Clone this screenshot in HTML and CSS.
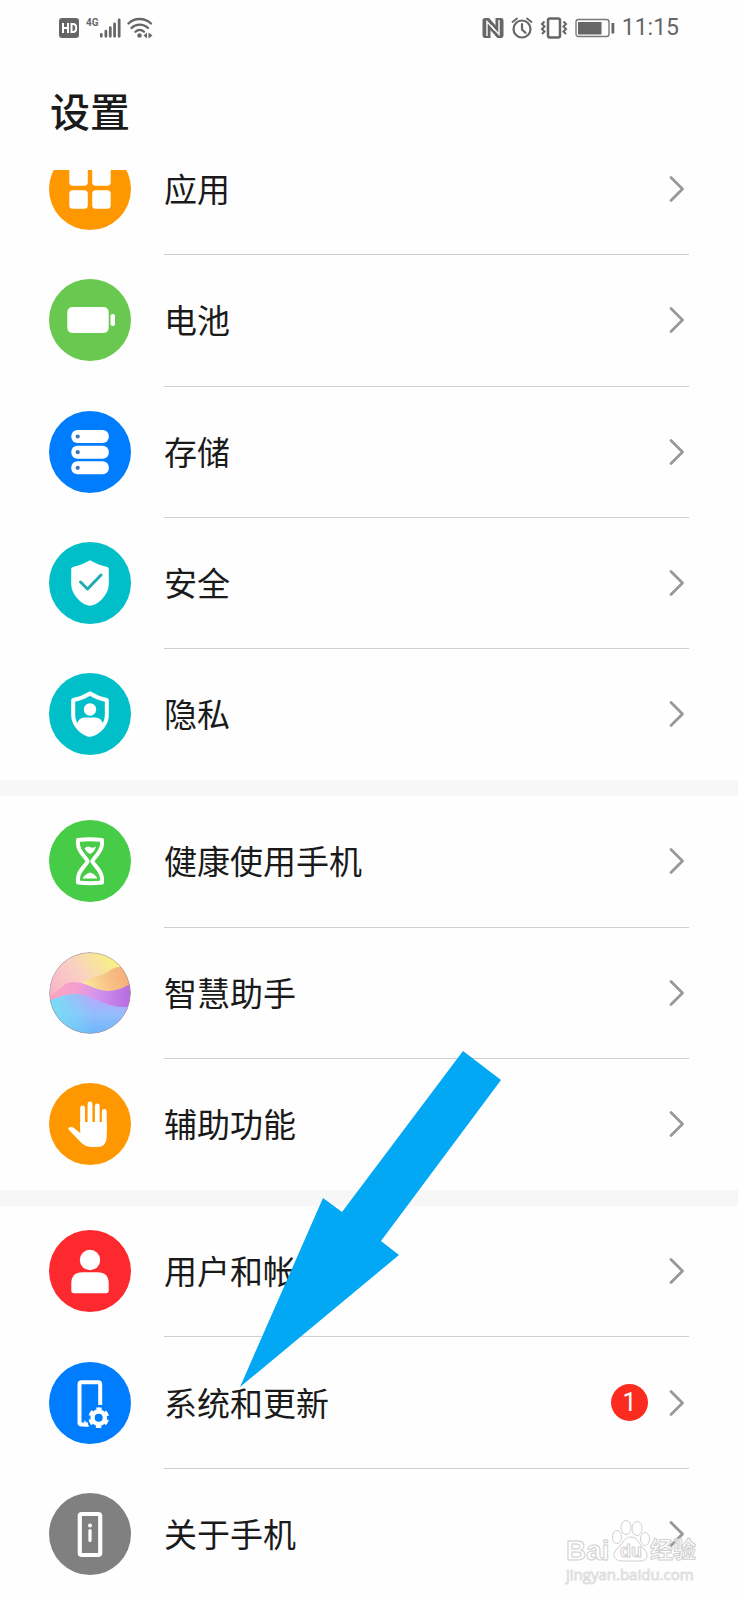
FILE: index.html
```html
<!DOCTYPE html>
<html lang="zh-CN">
<head>
    <meta charset="UTF-8">
    <meta name="viewport" content="width=device-width, initial-scale=1.0">
    <title>设置</title>
    <link rel="stylesheet" href="styles.css">
</head>
<body>
    <svg class="sprite" aria-hidden="true">
        <symbol id="chevron" viewBox="0 0 16 28">
            <path d="M2 2.5 L13.5 14 L2 25.5" fill="none" stroke="#989898" stroke-width="2.8" stroke-linecap="round" stroke-linejoin="round"/>
        </symbol>
    </svg>

    <div class="page">
        <header class="header">
            <div class="status-bar">
                <div class="status-left">
                    <svg width="21" height="22" viewBox="0 0 21 22">
                        <rect x="0" y="1" width="20" height="20" rx="3" fill="#666"/>
                        <path d="M4 6v10M9 6v10M4 11h5M12.5 7v8h1.5c2 0 3.2-1.5 3.2-4s-1.2-4-3.2-4z" fill="none" stroke="#fff" stroke-width="2"/>
                    </svg>
                    <div class="signal">
                        <span class="net">4G</span>
                        <svg width="22" height="22" viewBox="0 0 24 22">
                            <path d="M2.5 20v-2M7.5 20v-5.5M12.3 20v-9.5M17 20v-13.5M22 20V2" stroke="#666" stroke-width="3" stroke-linecap="round"/>
                        </svg>
                    </div>
                    <svg width="26" height="22" viewBox="0 0 26 22">
                        <g fill="none" stroke="#666" stroke-width="2.3" stroke-linecap="round">
                            <path d="M1.5 6.5c6-6 16-6 22.500 0M4.500 11c4.500-4.500 12-4.500 16.500 0M8.500 14.800c2.500-2.500 6-2.500 8.500 0"/>
                        </g>
                        <circle cx="12.5" cy="18.5" r="2.2" fill="#666"/>
                        <path d="M20 15.5v6l-3.500-3zM21.500 15.500v6l4-3z" fill="#666"/>
                    </svg>
                </div>
                <div class="status-right">
                    <svg width="22" height="22" viewBox="0 0 22 22">
                        <path d="M3 1h3.500L8.500 3.500V21H3Q.5 21 .5 18V4Q.5 1 3 1z" fill="#666"/>
                        <path d="M13.500 1H19q2.500 0 2.500 3v14q0 3-2.500 3h-3.500L13.500 18.500z" fill="#666"/>
                        <path d="M7 1L15.500 10.500V21L6.500 11z" fill="#666"/>
                        <path d="M5 19V4.500L13 13.500M17 3V17.500L9 8.500" fill="none" stroke="#fff" stroke-width="1.4"/>
                    </svg>
                    <svg width="22" height="22" viewBox="0 0 22 22">
                        <g fill="none" stroke="#666" stroke-linecap="round">
                            <circle cx="11" cy="12" r="8.5" stroke-width="2.2"/>
                            <path d="M11 7v5.500l3.500 3.200" stroke-width="2.2"/>
                            <path d="M1.500 5L6 1.500M20.500 5L16 1.500" stroke-width="1.8"/>
                        </g>
                    </svg>
                    <svg width="28" height="22" viewBox="0 0 28 22">
                        <g fill="none" stroke="#666">
                            <rect x="8" y="1.5" width="12" height="19" rx="2" stroke-width="2.5"/>
                            <path d="M4.500 4.500L2 7l2.500 2.500L2 12l2.500 2.500L2 17M23.500 4.500L26 7l-2.500 2.500L26 12l-2.500 2.500L26 17" stroke-width="2"/>
                        </g>
                    </svg>
                    <svg width="40" height="22" viewBox="0 0 40 22">
                        <rect x="1" y="2.5" width="33" height="17" rx="2.5" fill="none" stroke="#777" stroke-width="1.4"/>
                        <rect x="3" y="5" width="23.5" height="12.5" fill="#666"/>
                        <rect x="36.5" y="6" width="2.8" height="10.5" fill="#666"/>
                    </svg>
                    <span class="time">11:15</span>
                </div>
            </div>
            <h1>设置</h1>
        </header>

        <main class="list">
            <ul class="group">
                <li><a class="item" href="#apps">
                    <svg class="icon orange" viewBox="0 0 82 82">
                        <g fill="#fff">
                            <rect x="20.3" y="19.3" width="18.5" height="18.5" rx="3.5"/>
                            <rect x="43.2" y="19.3" width="18.5" height="18.5" rx="3.5"/>
                            <rect x="20.3" y="42.2" width="18.5" height="18.5" rx="3.5"/>
                            <rect x="43.2" y="42.2" width="18.5" height="18.5" rx="3.5"/>
                        </g>
                    </svg>
                    <span class="item-body"><span class="label">应用</span><svg class="chevron"><use href="#chevron"/></svg></span>
                </a></li>
                <li><a class="item" href="#battery">
                    <svg class="icon leaf" viewBox="0 0 82 82">
                        <rect x="18.3" y="28" width="41.4" height="26" rx="5" fill="#fff"/>
                        <rect x="61.5" y="35" width="4.5" height="12" rx="2" fill="#fff"/>
                    </svg>
                    <span class="item-body"><span class="label">电池</span><svg class="chevron"><use href="#chevron"/></svg></span>
                </a></li>
                <li><a class="item" href="#storage">
                    <svg class="icon blue" viewBox="0 0 82 82">
                        <g fill="#fff">
                            <rect x="22.3" y="19" width="37.5" height="13" rx="6"/>
                            <rect x="22.3" y="34.7" width="37.5" height="13" rx="6"/>
                            <rect x="22.3" y="50.3" width="37.5" height="13" rx="6"/>
                        </g>
                        <g fill="#3f74b5">
                            <circle cx="28.7" cy="25.5" r="2.1"/>
                            <circle cx="28.7" cy="41.2" r="2.1"/>
                            <circle cx="28.7" cy="56.8" r="2.1"/>
                        </g>
                    </svg>
                    <span class="item-body"><span class="label">存储</span><svg class="chevron"><use href="#chevron"/></svg></span>
                </a></li>
                <li><a class="item" href="#security">
                    <svg class="icon teal" viewBox="0 0 82 82">
                        <path d="M41 18.300Q51 23.800 58.300 25Q59.800 25.300 59.800 27V42C59.800 52 51 61 43.500 63.300Q41 64 38.500 63.300C31 61 22.200 52 22.200 42V27Q22.200 25.300 23.700 25Q31 23.800 41 18.300z" fill="#fff"/>
                        <path d="M31.500 40l7 7L52 33" fill="none" stroke="#22abb0" stroke-width="3" stroke-linecap="round" stroke-linejoin="round"/>
                    </svg>
                    <span class="item-body"><span class="label">安全</span><svg class="chevron"><use href="#chevron"/></svg></span>
                </a></li>
                <li><a class="item" href="#privacy">
                    <svg class="icon teal" viewBox="0 0 82 82">
                        <path d="M41 20.500Q49 25.500 57.800 27V42C57.800 51 51 58.500 43 61.500Q41 62.200 39 61.500C31 58.500 24.200 51 24.200 42V27Q33 25.500 41 20.500z" fill="none" stroke="#fff" stroke-width="4" stroke-linejoin="round"/>
                        <circle cx="41" cy="36.5" r="6.2" fill="#fff"/>
                        <path d="M28 52Q29 44.500 36 44.500H46Q53 44.500 54 52Q48 59.500 41 61.500Q34 59.500 28 52z" fill="#fff"/>
                    </svg>
                    <span class="item-body"><span class="label">隐私</span><svg class="chevron"><use href="#chevron"/></svg></span>
                </a></li>
            </ul>

            <ul class="group">
                <li><a class="item" href="#wellbeing">
                    <svg class="icon green" viewBox="0 0 82 82">
                        <path d="M29 20Q41 18.500 53 20V24C53 32 45 37 43.300 41.200C45 45.500 53 50.500 53 58.500V62.500Q41 64 29 62.500V58.500C29 50.500 37 45.500 38.700 41.200C37 37 29 32 29 24z" fill="none" stroke="#fff" stroke-width="4" stroke-linejoin="round"/>
                        <path d="M35.500 28.500Q38 25.500 41 27T47 26.500Q45.500 32 41 34Q37.500 32.500 35.500 28.500z" fill="#fff"/>
                        <path d="M33.500 58.500Q36 54 41 52.500Q46 54 48.500 58.500z" fill="#fff"/>
                    </svg>
                    <span class="item-body"><span class="label">健康使用手机</span><svg class="chevron"><use href="#chevron"/></svg></span>
                </a></li>
                <li><a class="item" href="#assistant">
                    <svg class="icon" viewBox="0 0 82 82">
                        <defs>
                            <linearGradient id="sky" x1="0" y1=".5" x2=".7" y2="0"><stop offset="0" stop-color="#f9b3c9"/><stop offset=".5" stop-color="#fad0c4"/><stop offset="1" stop-color="#f8ef86"/></linearGradient>
                            <linearGradient id="sun" x1="1" y1=".3" x2="0" y2=".5"><stop offset="0" stop-color="#f5a97a"/><stop offset=".5" stop-color="#f8c286"/><stop offset="1" stop-color="#f9e79c"/></linearGradient>
                            <linearGradient id="pink" x1="0" y1="0" x2="1" y2="0"><stop offset="0" stop-color="#fba6bd"/><stop offset=".35" stop-color="#f49fd0"/><stop offset=".6" stop-color="#cf92ee"/><stop offset="1" stop-color="#b56be0"/></linearGradient>
                            <linearGradient id="sea" x1=".6" y1="0" x2=".5" y2="1"><stop offset="0" stop-color="#bda5fa"/><stop offset=".5" stop-color="#93bdfc"/><stop offset="1" stop-color="#6cb5fb"/></linearGradient>
                            <linearGradient id="foam" x1="0" y1="0" x2="1" y2="0"><stop offset="0" stop-color="#74e0f5"/><stop offset="1" stop-color="#74e0f5" stop-opacity="0"/></linearGradient>
                            <clipPath id="ball"><circle cx="41" cy="41" r="40.5"/></clipPath>
                        </defs>
                        <g clip-path="url(#ball)">
                            <rect width="82" height="82" fill="url(#sky)"/>
                            <path d="M34 30C44 24 54 24 60 19S74 14 82 18V42H45C40 38 36 34 34 30z" fill="url(#sun)"/>
                            <path d="M0 45C12 38 14 30 24 30C38 30 46 39 59 39C69 39 75 35 82 32V60H0z" fill="url(#pink)"/>
                            <path d="M0 49C12 44 22 40 36 43C50 47 56 56 82 55V82H0z" fill="url(#sea)"/>
                            <path d="M0 49C12 44 22 40 36 43C42 50 44 66 46 82H0z" fill="url(#foam)"/>
                        </g>
                        <circle cx="41" cy="41" r="40.5" fill="none" stroke="#9d8fa0" stroke-width="1" opacity=".7"/>
                    </svg>
                    <span class="item-body"><span class="label">智慧助手</span><svg class="chevron"><use href="#chevron"/></svg></span>
                </a></li>
                <li><a class="item" href="#accessibility">
                    <svg class="icon orange" viewBox="0 0 82 82">
                        <path d="M33.600 25v20M41 21v23M48.300 23v20M55.300 28.500v20" stroke="#fff" stroke-width="4.8" stroke-linecap="round"/>
                        <path d="M31.200 39H57.700V54Q57.700 64 47.500 64H42Q36 63.500 32 59.500L20 47Q18.500 45 20.500 44.200Q22.500 43.400 25 45L31.200 50z" fill="#fff"/>
                    </svg>
                    <span class="item-body"><span class="label">辅助功能</span><svg class="chevron"><use href="#chevron"/></svg></span>
                </a></li>
            </ul>

            <ul class="group">
                <li><a class="item" href="#accounts">
                    <svg class="icon red" viewBox="0 0 82 82">
                        <circle cx="41" cy="30" r="10.2" fill="#fff"/>
                        <path d="M22.300 53.500Q22.300 42.300 33.500 42.300H48.500Q59.700 42.300 59.700 53.500V60.500Q59.700 63.300 57 63.300H25Q22.300 63.300 22.300 60.500z" fill="#fff"/>
                    </svg>
                    <span class="item-body"><span class="label">用户和帐户</span><svg class="chevron"><use href="#chevron"/></svg></span>
                </a></li>
                <li><a class="item" href="#system">
                    <svg class="icon blue" viewBox="0 0 82 82">
                        <path d="M51.200 43V22.500Q51.200 20.300 49 20.300H32.500Q30.500 20.300 30.500 22.500V60.500Q30.500 62.500 32.500 62.500H39" fill="none" stroke="#fff" stroke-width="4"/>
                        <path d="M35.500 58L40.500 64.500H35z" fill="#fff"/>
                        <circle cx="49.7" cy="55.7" r="6.2" fill="none" stroke="#fff" stroke-width="4.4"/>
                        <circle cx="49.7" cy="55.7" r="8.6" fill="none" stroke="#fff" stroke-width="3.6" stroke-dasharray="5 4.006" stroke-dashoffset="-2"/>
                    </svg>
                    <span class="item-body"><span class="label">系统和更新</span><span class="badge">1</span><svg class="chevron"><use href="#chevron"/></svg></span>
                </a></li>
                <li><a class="item" href="#about">
                    <svg class="icon gray" viewBox="0 0 82 82">
                        <rect x="30.8" y="21" width="20.4" height="41" rx="2" fill="none" stroke="#fff" stroke-width="4.2"/>
                        <circle cx="41" cy="32.6" r="2" fill="#fff"/>
                        <path d="M41 37.500v10" stroke="#fff" stroke-width="3.2" stroke-linecap="round"/>
                    </svg>
                    <span class="item-body"><span class="label">关于手机</span><svg class="chevron"><use href="#chevron"/></svg></span>
                </a></li>
            </ul>
        </main>

        <!-- 指向“系统和更新”的箭头 -->
        <svg class="pointer" viewBox="0 0 262 336" aria-hidden="true">
            <path d="M0 336L83 147L102 161L223 0L261 29L141 190L159 204z" fill="#02a8f4"/>
        </svg>

        <div class="watermark">
            <svg width="134" height="46" viewBox="0 0 134 46">
                <g fill="#fff" fill-opacity=".7" stroke="#d0d0d0" stroke-width="1">
                    <ellipse cx="51" cy="19" rx="4.5" ry="6.5"/>
                    <ellipse cx="60" cy="9.500" rx="5" ry="7"/>
                    <ellipse cx="71" cy="10.500" rx="5" ry="7"/>
                    <ellipse cx="79" cy="21" rx="4.5" ry="6.5"/>
                    <path d="M65 19C71 19 73 26 78 31S82 43 74 43H56C48 43 45 36 51 31S58 19 65 19z"/>
                    <text class="wm-latin" x="0" y="42">Bai</text>
                    <text class="wm-du" x="54" y="39">du</text>
                    <text class="wm-han" x="84" y="40">经验</text>
                </g>
            </svg>
            <span class="wm-url">jingyan.baidu.com</span>
        </div>
    </div>
</body>
</html>
```

FILE: styles.css
```css
* {
    box-sizing: border-box;
}

body {
    margin: 0;
    background-color: #fefefe;
    color: #1a1a1a;
    font-family: Roboto, "Noto Sans CJK SC", sans-serif;
}

.sprite {
    position: absolute;
    width: 0;
    height: 0;
}

.page {
    position: relative;
    display: flex;
    flex-direction: column;
    min-height: 100vh;
    overflow: hidden;
}

/* 顶部 */
.header {
    position: relative;
    z-index: 1;
    height: 170px;
    background-color: #fefefe;
}

.status-bar {
    display: flex;
    justify-content: space-between;
    height: 56px;
    padding: 0 59px;
    color: #666;
}

.status-bar svg {
    display: block;
    flex: none;
}

.status-left, .status-right {
    display: flex;
    align-items: center;
    gap: 6px;
}

.status-right {
    gap: 7px;
}

.signal {
    display: flex;
    align-items: flex-start;
}

.net {
    font-size: 10px;
    line-height: 12px;
    font-weight: 700;
}

.time {
    font-size: 23px;
    line-height: 24px;
}

h1 {
    margin: 0;
    padding: 34px 50px 0;
    font-size: 40px;
    line-height: 48px;
    font-weight: 500;
}

/* 列表，第一项滚动到标题下面 */
.list {
    display: flex;
    flex-direction: column;
    flex: 1;
    gap: 16px;
    margin-top: -46px;
    background-color: #f7f7f7;
}

.group {
    display: flex;
    flex-direction: column;
    margin: 0;
    padding: 0;
    list-style: none;
    background-color: #fefefe;
}

.group:first-child {
    flex: 5 0 auto;
}

.group:nth-child(2), .group:nth-child(3) {
    flex: 3 0 auto;
}

.group li {
    display: flex;
    flex: 1 0 auto;
    min-height: 131px;
}

.item {
    display: flex;
    flex: 1;
    align-items: center;
    gap: 33px;
    padding: 0 49px;
    color: inherit;
    text-decoration: none;
}

.icon {
    flex: none;
    width: 82px;
    height: 82px;
    margin-bottom: 1px;
    border-radius: 50%;
}

.orange { background-color: #ff9800; }
.leaf { background-color: #69c84f; }
.blue { background-color: #007dff; }
.teal { background-color: #00bfc9; }
.green { background-color: #47cc47; }
.red { background-color: #fc2a2f; }
.gray { background-color: #808080; }

.item-body {
    display: flex;
    flex: 1;
    align-self: stretch;
    align-items: center;
    gap: 21px;
    padding-right: 4px;
    border-bottom: 1px solid #d0d0d0;
}

li:last-child .item-body {
    border-bottom-color: transparent;
}

.label {
    flex: 1;
    padding-top: 4px;
    font-size: 33px;
    line-height: 48px;
}

.chevron {
    flex: none;
    width: 16px;
    height: 28px;
}

.badge {
    width: 37px;
    height: 37px;
    border-radius: 50%;
    background-color: #fb2c1f;
    color: #fff;
    font-size: 25px;
    line-height: 38px;
    text-align: center;
}

.pointer {
    position: absolute;
    top: 1051px;
    left: 240px;
    width: 262px;
    height: 336px;
}

/* 水印 */
.watermark {
    position: absolute;
    right: 38px;
    bottom: 16px;
    display: flex;
    flex-direction: column;
    width: 134px;
}

.wm-latin {
    font: bold 28px "Liberation Sans", sans-serif;
}

.wm-du {
    font: bold 18px "Liberation Sans", sans-serif;
}

.wm-han {
    font: bold 23px "Noto Sans CJK SC", sans-serif;
}

.wm-url {
    color: #fff;
    font-family: "Open Sans", sans-serif;
    font-size: 15px;
    line-height: 20px;
    -webkit-text-stroke: 1px #dedede;
}
```
